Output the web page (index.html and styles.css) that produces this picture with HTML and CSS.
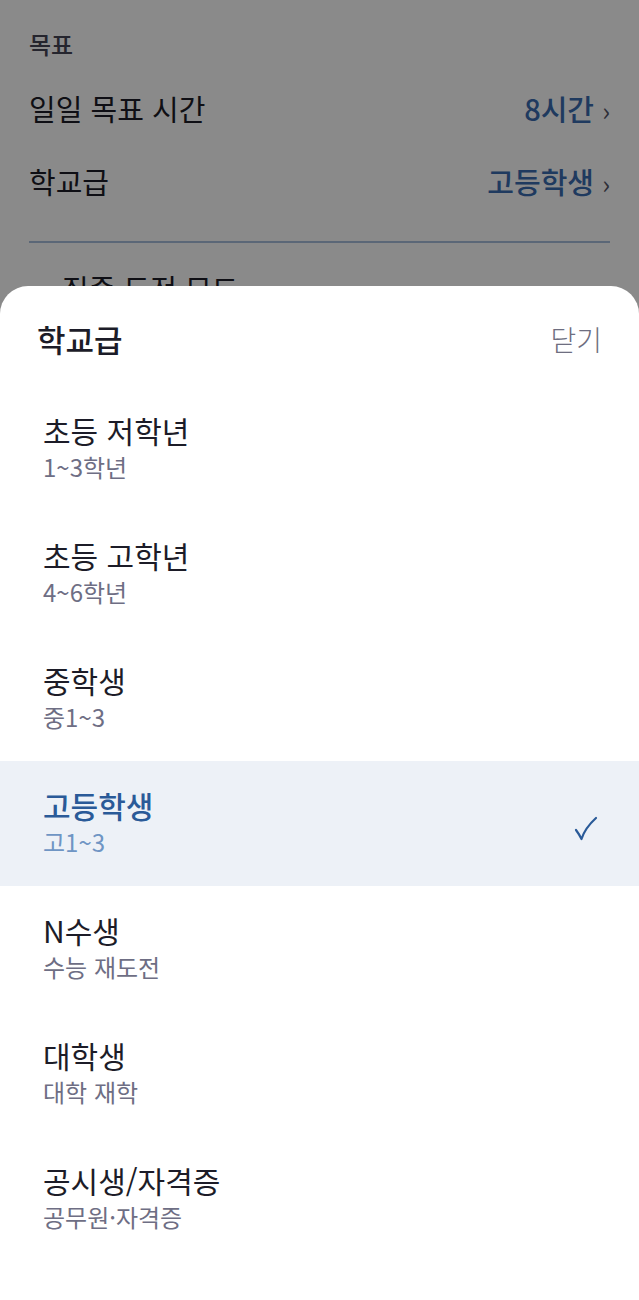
FILE: index.html
```html
<!DOCTYPE html>
<html lang="ko">
<head>
  <meta charset="UTF-8" />
  <title>설정</title>
  <link rel="stylesheet" href="styles.css">
</head>
<body>
  <div class="page">
    <div class="section-label">목표</div>
    <div class="row">
      <span class="row-name">일일 목표 시간</span>
      <span class="row-value">8시간 <span class="chev">›</span></span>
    </div>
    <div class="row">
      <span class="row-name">학교급</span>
      <span class="row-value">고등학생 <span class="chev">›</span></span>
    </div>
    <div class="divider"></div>
    <div class="row toggle-row">
      <span class="row-name">집중 도전 모드</span>
    </div>
  </div>

  <div class="dim"></div>

  <div class="sheet">
    <div class="sheet-head">
      <h2>학교급</h2>
      <button class="close">닫기</button>
    </div>
    <ul class="options">
      <li class="option">
        <div class="opt-title">초등 저학년</div>
        <div class="opt-sub">1~3학년</div>
      </li>
      <li class="option">
        <div class="opt-title">초등 고학년</div>
        <div class="opt-sub">4~6학년</div>
      </li>
      <li class="option">
        <div class="opt-title">중학생</div>
        <div class="opt-sub">중1~3</div>
      </li>
      <li class="option selected">
        <div>
          <div class="opt-title">고등학생</div>
          <div class="opt-sub">고1~3</div>
        </div>
        <svg class="check" width="26" height="30" viewBox="0 0 26 30">
          <path d="M3 16 Q6 20 8.5 25 Q12 14 23 4" fill="none" stroke="#2a5a98" stroke-width="2.2" stroke-linecap="round" stroke-linejoin="round"/>
        </svg>
      </li>
      <li class="option">
        <div class="opt-title">N수생</div>
        <div class="opt-sub">수능 재도전</div>
      </li>
      <li class="option">
        <div class="opt-title">대학생</div>
        <div class="opt-sub">대학 재학</div>
      </li>
      <li class="option">
        <div class="opt-title">공시생/자격증</div>
        <div class="opt-sub">공무원·자격증</div>
      </li>
    </ul>
  </div>
</body>
</html>
```

FILE: styles.css
```css
body {
  margin: 0;
  font-family: 'Noto Sans CJK KR', 'Noto Sans', sans-serif;
  background-color: #fff;
  color: #1c1c28;
  height: 1300px;
  overflow: hidden;
}
.page {
  padding: 28px 29px 0;
}
.section-label {
  font-size: 24px;
  line-height: 32px;
  font-weight: 500;
  color: #454556;
}
.row {
  display: flex;
  justify-content: space-between;
  align-items: center;
  height: 73px;
}
.section-label + .row {
  margin-top: 11px;
}
.row-name {
  font-size: 29px;
  font-weight: 400;
}
.row-value {
  font-size: 29px;
  font-weight: 500;
  color: #3a6cb0;
}
.chev {
  color: #555566;
  font-weight: 400;
  font-size: 26px;
}
.divider {
  height: 2px;
  margin-top: 24px;
  background-color: #a9bfdc;
}
.toggle-row {
  padding-left: 33px;
  height: 90px;
}
.dim {
  position: fixed;
  inset: 0;
  background-color: rgba(0, 0, 0, 0.46);
}
.sheet {
  position: absolute;
  left: 0;
  right: 0;
  top: 286px;
  bottom: 0;
  background-color: #fff;
  border-radius: 28px 28px 0 0;
}
.sheet-head {
  display: flex;
  justify-content: space-between;
  align-items: center;
  padding: 33px 37px 27px;
}
.sheet-head h2 {
  margin: 0;
  font-size: 31px;
  line-height: 40px;
  font-weight: 500;
  color: #1c1c28;
}
.close {
  border: none;
  background: none;
  padding: 0;
  font-family: inherit;
  font-size: 28px;
  font-weight: 300;
  line-height: 40px;
  color: #6e6e80;
}
.options {
  list-style: none;
  margin: 0;
  padding: 0;
}
.option {
  display: flex;
  justify-content: space-between;
  align-items: center;
  flex-wrap: wrap;
  align-content: flex-start;
  height: 125px;
  box-sizing: border-box;
  padding: 24px 40px 0 43px;
}
.option > .opt-title,
.option > .opt-sub {
  width: 100%;
}
.opt-title {
  font-size: 30px;
  line-height: 40px;
  font-weight: 400;
  color: #1c1c28;
}
.opt-sub {
  font-size: 24px;
  line-height: 34px;
  font-weight: 400;
  color: #6e6e84;
}
.option.selected {
  background-color: #edf1f7;
  align-content: normal;
  align-items: flex-start;
}
.selected .opt-title {
  color: #2a5a98;
  font-weight: 500;
}
.selected .opt-sub {
  color: #6f95c4;
}
.check {
  margin-top: 29px;
}
```
